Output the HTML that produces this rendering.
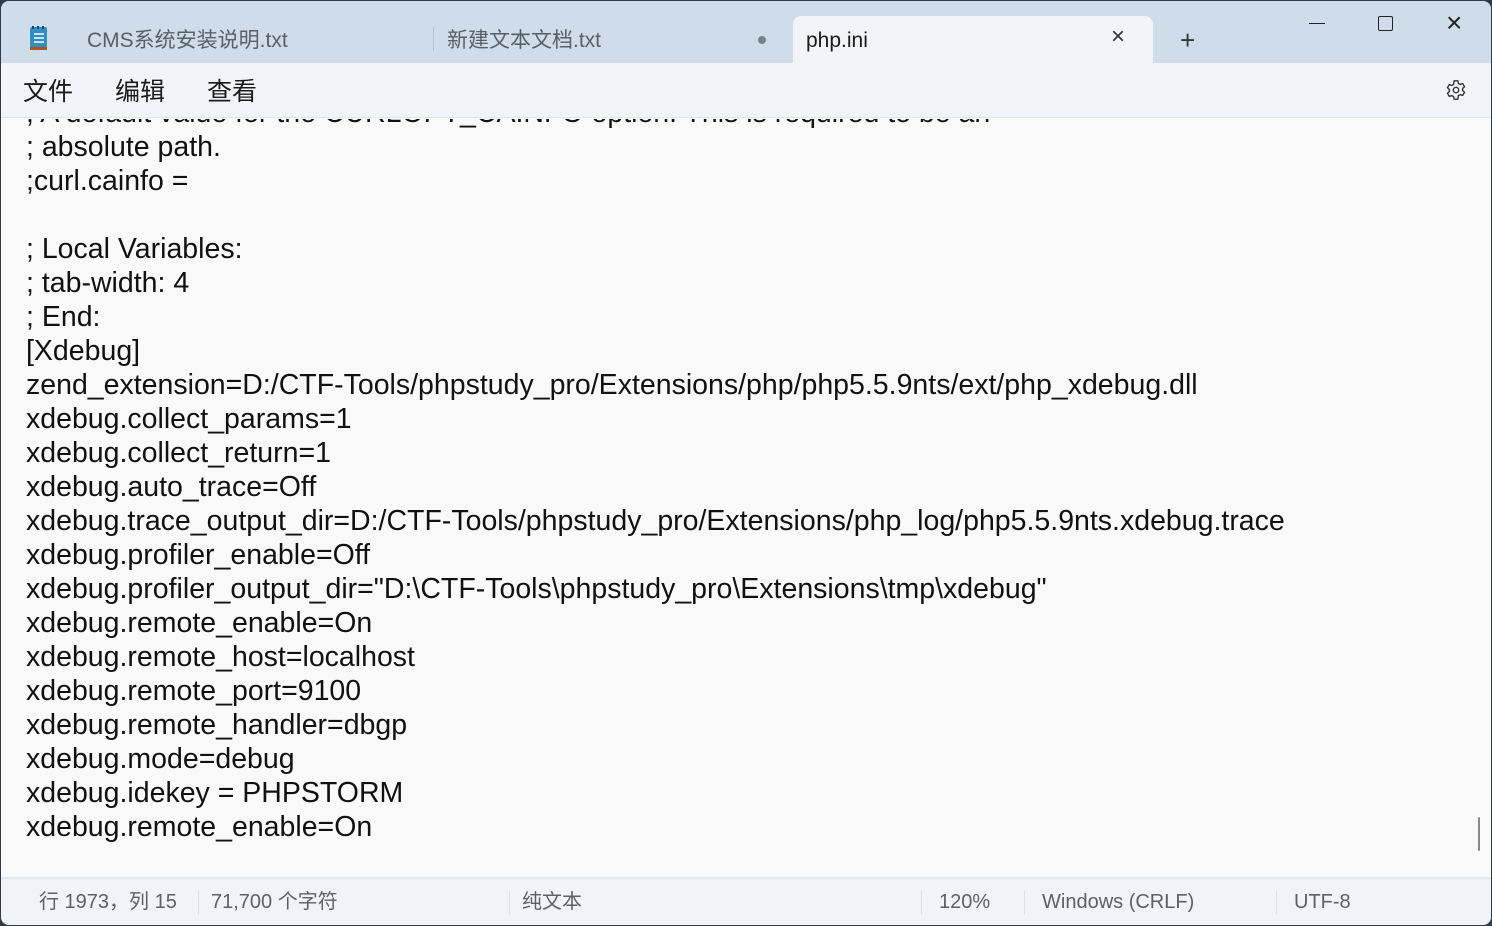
<!DOCTYPE html>
<html><head><meta charset="utf-8"><style>
*{margin:0;padding:0;box-sizing:border-box}
body{width:1492px;height:926px;background:#2e3b4a;font-family:"Liberation Sans","Noto Sans CJK SC",sans-serif;overflow:hidden;position:relative}
.win{position:absolute;left:1px;top:1px;width:1490px;height:924px;border-radius:8px;overflow:hidden;background:#f9f9f9}
.title{position:absolute;left:0;top:0;width:1490px;height:62px;background:#cedde9}
.tab{position:absolute;top:0;height:62px;font-size:21px;color:#5a5f66;line-height:80px}
.active{position:absolute;left:792px;top:15px;width:360px;height:47px;background:#f1f5f9;border-radius:8px 8px 0 0}
.menu{position:absolute;left:0;top:62px;width:1490px;height:55px;background:#f1f5f9;border-bottom:1px solid #e2e6ea}
.menu span{position:absolute;top:12px;font-size:25px;line-height:34px;color:#1a1a1a}
.content{position:absolute;left:25px;top:118px;width:1440px;height:758px;overflow:hidden;font-size:28.5px;color:#111;line-height:34px;white-space:pre}
.content div{height:34px}
.status{position:absolute;left:0;top:876px;width:1490px;height:48px;background:#f0f3f7;border-top:2px solid #e3e7eb;font-size:20px;color:#5d6166}
.status span{position:absolute;top:10px;line-height:26px;height:26px}
.sep{position:absolute;top:12px;width:1px;height:24px;background:#dde1e5}
</style></head><body><div class="win">
<div class="title">
<svg style="position:absolute;left:28px;top:25px" width="20" height="25" viewBox="0 0 20 25"><rect x="1" y="1" width="17" height="21" rx="2" fill="#2f8fc3"/><rect x="1" y="21" width="17" height="3" fill="#b0561a"/><g stroke="#fff" stroke-width="1.5"><line x1="5" y1="8" x2="15" y2="8"/><line x1="5" y1="12" x2="15" y2="12"/><line x1="5" y1="16" x2="15" y2="16"/></g><g fill="#174a6e"><rect x="3" y="0" width="2" height="3"/><rect x="8" y="0" width="2" height="3"/><rect x="13" y="0" width="2" height="3"/></g></svg>
<div class="tab" style="left:86px">CMS系统安装说明.txt</div>
<div style="position:absolute;left:432px;top:26px;width:1px;height:24px;background:#b5c2cd"></div>
<div class="tab" style="left:446px">新建文本文档.txt</div>
<div style="position:absolute;left:757px;top:35px;width:8px;height:8px;border-radius:50%;background:#7b8188"></div>
<div class="active"></div>
<div class="tab" style="left:805px;color:#1a1a1a">php.ini</div>
<div style="position:absolute;left:1110px;top:22px;font-size:24px;color:#333">×</div>
<div style="position:absolute;left:1179px;top:24px;font-size:26px;color:#333">+</div>
<div style="position:absolute;left:1308px;top:22px;width:16px;height:1px;background:#222"></div>
<div style="position:absolute;left:1377px;top:15px;width:15px;height:15px;border:1.5px solid #222;border-radius:2px"></div>
<div style="position:absolute;left:1445px;top:6px;font-size:28px;color:#222">×</div>
</div>
<div class="menu"><span style="left:22px">文件</span><span style="left:114px">编辑</span><span style="left:206px">查看</span>
<svg style="position:absolute;left:1444px;top:16px" width="22" height="22" viewBox="0 0 24 24" fill="none" stroke="#333" stroke-width="1.5"><circle cx="12" cy="12" r="3"/><path d="M10 2h4l.6 2.8 2 1.1 2.7-.9 2 3.4-2.1 1.9v2.3l2.1 1.9-2 3.4-2.7-.9-2 1.1L14 22h-4l-.6-2.8-2-1.1-2.7.9-2-3.4 2.1-1.9v-2.3L2.7 9.5l2-3.4 2.7.9 2-1.1z"/></svg></div>
<div class="content"><div style="margin-top:-23px">; A default value for the CURLOPT_CAINFO option. This is required to be an</div><div>; absolute path.</div><div>;curl.cainfo =</div><div></div><div>; Local Variables:</div><div>; tab-width: 4</div><div>; End:</div><div>[Xdebug]</div><div>zend_extension=D:/CTF-Tools/phpstudy_pro/Extensions/php/php5.5.9nts/ext/php_xdebug.dll</div><div>xdebug.collect_params=1</div><div>xdebug.collect_return=1</div><div>xdebug.auto_trace=Off</div><div>xdebug.trace_output_dir=D:/CTF-Tools/phpstudy_pro/Extensions/php_log/php5.5.9nts.xdebug.trace</div><div>xdebug.profiler_enable=Off</div><div>xdebug.profiler_output_dir="D:\CTF-Tools\phpstudy_pro\Extensions\tmp\xdebug"</div><div>xdebug.remote_enable=On</div><div>xdebug.remote_host=localhost</div><div>xdebug.remote_port=9100</div><div>xdebug.remote_handler=dbgp</div><div>xdebug.mode=debug</div><div>xdebug.idekey = PHPSTORM</div><div>xdebug.remote_enable=On</div></div>
<div style="position:absolute;left:1477px;top:816px;width:2px;height:34px;background:#8a8a8a;border-radius:1px"></div>
<div class="status"><span style="left:38px">行 1973，列 15</span><div class="sep" style="left:197px"></div><span style="left:210px">71,700 个字符</span><div class="sep" style="left:508px"></div><span style="left:521px">纯文本</span><div class="sep" style="left:920px"></div><span style="left:938px">120%</span><div class="sep" style="left:1023px"></div><span style="left:1041px">Windows (CRLF)</span><div class="sep" style="left:1275px"></div><span style="left:1293px">UTF-8</span></div>
</div></body></html>
